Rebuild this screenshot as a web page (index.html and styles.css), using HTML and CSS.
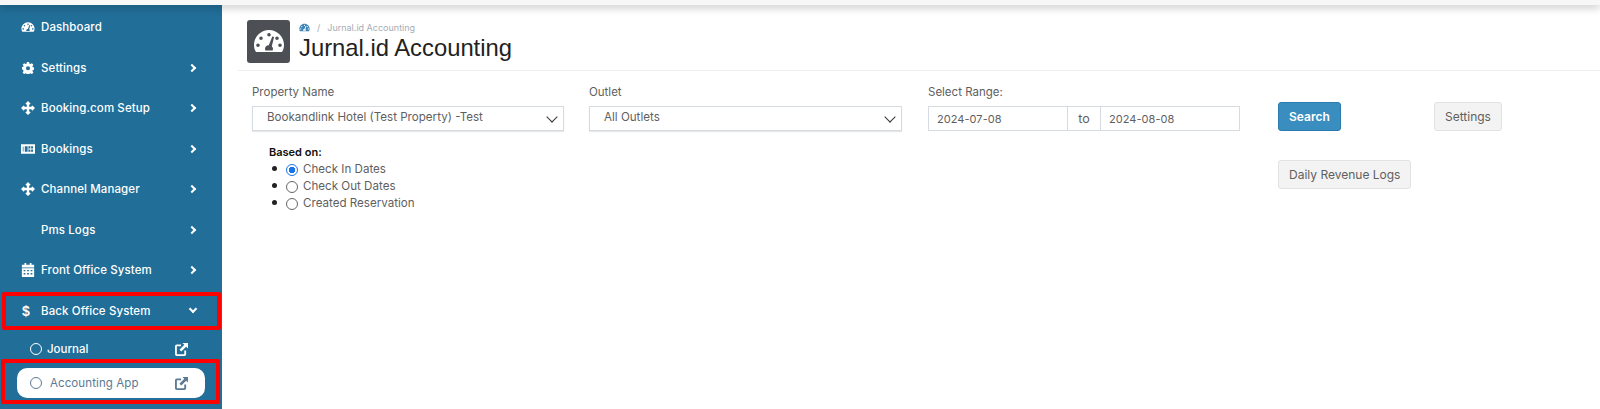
FILE: index.html
```html
<!DOCTYPE html>
<html lang="en">

<head>
    <meta charset="UTF-8">
    <meta name="viewport" content="width=device-width, initial-scale=1.0">
    <title>Jurnal.id Accounting</title>
    <link rel="stylesheet" href="styles.css">
</head>

<body>
    <svg class="defs" width="0" height="0">
        <symbol id="gauge" viewBox="0 0 32 24">
            <path fill="currentColor" fill-rule="evenodd" d="M16 1C7.500 1 1 8 1 16c0 3 .8 5.200 2 7h26c1.200-1.800 2-4 2-7 0-8-6.500-15-15-15zM16 4a1.800 1.800 0 1 1 0 3.600A1.800 1.800 0 0 1 16 4zM8 7.500a1.800 1.800 0 1 1 0 3.600 1.800 1.800 0 0 1 0-3.600zM24 7.500a1.800 1.800 0 1 1 0 3.600 1.800 1.800 0 0 1 0-3.600zM5 14.500a1.800 1.800 0 1 1 0 3.600 1.800 1.800 0 0 1 0-3.600zM27 14.500a1.800 1.800 0 1 1 0 3.600 1.800 1.800 0 0 1 0-3.600zM19.300 7.600l1.800.5-2.300 9.100c.8.700 1.200 1.600 1.200 2.600 0 .6-.1 1.100-.4 1.600h-7.200c-.3-.5-.4-1-.4-1.600 0-2 1.700-3.600 3.800-3.500z"/>
        </symbol>
        <symbol id="cog" viewBox="0 0 16 16">
            <path fill="currentColor" fill-rule="evenodd" d="M6.500 0h3l.4 2.200 1.400.6L13.200 1.500l2 2.300-1.300 1.800.6 1.400 1.500.3v3l-1.500.4-.6 1.400 1.300 1.800-2 2.300-1.900-1.300-1.400.6-.4 1.500h-3l-.4-1.500-1.400-.6-1.900 1.300-2-2.300 1.300-1.800-.6-1.400L0 9.800v-3l1.500-.3.6-1.400L.8 3.800l2-2.300 1.900 1.300 1.400-.6zM8 5.500a2.700 2.700 0 1 0 0 5.400 2.700 2.700 0 0 0 0-5.400z"/>
        </symbol>
        <symbol id="move" viewBox="0 0 16 16">
            <path fill="currentColor" d="M8 0l3 3-1 1H9.300v2.700H12V6l1-1 3 3-3 3-1-1v-.7H9.300V12H10l1 1-3 3-3-3 1-1h.7V9.300H4V10l-1 1-3-3 3-3 1 1v.7h2.700V4H6L5 3z"/>
        </symbol>
        <symbol id="card" viewBox="0 0 18 14">
            <path fill="currentColor" fill-rule="evenodd" d="M0 1h18v12H0zM5 3.500v7h3.500v-7zM9.500 3.500v7H15.500v-7zM2 4v1.200h2V4zM2 6.400v1.200h2V6.400zM2 8.800V10h2V8.800z"/>
            <path fill="currentColor" d="M9.500 6.500h6v1h-6zM12 3.500h1v7h-1z"/>
        </symbol>
        <symbol id="calendar" viewBox="0 0 14 16">
            <path fill="currentColor" fill-rule="evenodd" d="M3 0h2v2h4V0h2v2h3v3H0V2h3zM0 6h14v10H0zM2 8v1.500h2V8zM6 8v1.500h2V8zM10 8v1.500h2V8zM2 11.500V13h2v-1.500zM6 11.500V13h2v-1.500zM10 11.500V13h2v-1.500z"/>
        </symbol>
        <symbol id="link" viewBox="0 0 14 14">
            <path fill="none" stroke="currentColor" stroke-width="2" d="M6.500 2.500H1.900a.9.900 0 0 0-.9.900v8.700c0 .5.400.9.900.9h8.200c.5 0 .9-.4.900-.9V8"/>
            <path fill="currentColor" d="M8 0h6v6l-2-2-5.200 5.200-2-2L10 2z"/>
        </symbol>
    </svg>

    <div class="topbar"></div>

    <div class="wrap">
        <aside class="sidebar">
            <a class="nav-item"><svg class="nav-icon"><use href="#gauge"/></svg><span class="nav-label">Dashboard</span></a>
            <a class="nav-item"><svg class="nav-icon nav-icon-sm"><use href="#cog"/></svg><span class="nav-label">Settings</span><i class="chev"></i></a>
            <a class="nav-item"><svg class="nav-icon"><use href="#move"/></svg><span class="nav-label">Booking.com Setup</span><i class="chev"></i></a>
            <a class="nav-item"><svg class="nav-icon"><use href="#card"/></svg><span class="nav-label">Bookings</span><i class="chev"></i></a>
            <a class="nav-item"><svg class="nav-icon"><use href="#move"/></svg><span class="nav-label">Channel Manager</span><i class="chev"></i></a>
            <a class="nav-item"><span class="nav-icon"></span><span class="nav-label">Pms Logs</span><i class="chev"></i></a>
            <a class="nav-item"><svg class="nav-icon"><use href="#calendar"/></svg><span class="nav-label">Front Office System</span><i class="chev"></i></a>
            <a class="nav-item nav-open"><span class="nav-icon dollar">$</span><span class="nav-label">Back Office System</span><i class="chev chev-down"></i></a>
            <a class="sub-item"><i class="ring"></i><span class="sub-label">Journal</span><svg class="sub-link"><use href="#link"/></svg></a>
            <a class="sub-item sub-active"><i class="ring"></i><span class="sub-label">Accounting App</span><svg class="sub-link"><use href="#link"/></svg></a>
        </aside>

        <main class="content">
            <header class="page-head">
                <div class="page-icon"><svg class="page-gauge"><use href="#gauge"/></svg></div>
                <div class="page-titles">
                    <div class="crumbs"><svg class="crumb-icon"><use href="#gauge"/></svg><span class="crumb-sep">/</span><span>Jurnal.id Accounting</span></div>
                    <h1>Jurnal.id Accounting</h1>
                </div>
            </header>

            <form class="filters">
                <div class="col-property">
                    <label class="field-label">Property Name</label>
                    <div class="select">Bookandlink Hotel (Test Property) -Test<i class="select-arrow"></i></div>
                    <div class="based">
                        <b>Based on:</b>
                        <ul>
                            <li><span class="radio radio-on"></span>Check In Dates</li>
                            <li><span class="radio"></span>Check Out Dates</li>
                            <li><span class="radio"></span>Created Reservation</li>
                        </ul>
                    </div>
                </div>
                <div class="col-outlet">
                    <label class="field-label">Outlet</label>
                    <div class="select">All Outlets<i class="select-arrow"></i></div>
                </div>
                <div class="col-range">
                    <label class="field-label">Select Range:</label>
                    <div class="range">
                        <span class="range-date">2024-07-08</span>
                        <span class="range-to">to</span>
                        <span class="range-date">2024-08-08</span>
                    </div>
                </div>
                <div class="col-actions">
                    <div class="btn btn-primary">Search</div>
                    <div class="btn">Daily Revenue Logs</div>
                </div>
                <div class="col-settings">
                    <div class="btn">Settings</div>
                </div>
            </form>
        </main>
    </div>

    <!-- red marks drawn over the screenshot -->
    <div class="mark mark-back"></div>
    <div class="mark mark-app"></div>
</body>

</html>
```

FILE: styles.css
```css
* {
    padding: 0;
    margin: 0;
    box-sizing: border-box;
}

html,
body {
    height: 409px;
    overflow: hidden;
}

body {
    position: relative;
    background: #fff;
    font-family: Inter, "Liberation Sans", sans-serif;
    font-size: 11px;
    color: #5f5f5f;
}

ul,
li {
    list-style: none;
}

.defs {
    position: absolute;
}

.topbar {
    height: 5px;
    background: #f7f7f7;
    box-shadow: 0 2px 8px rgba(0, 0, 0, .3);
    position: relative;
    z-index: 2;
}

.wrap {
    display: flex;
    height: 404px;
}

.sidebar {
    width: 222px;
    flex: none;
    background: #216e99;
    padding-top: 2px;
    color: #fff;
}

.nav-item {
    display: flex;
    align-items: center;
    height: 40.5px;
    padding-left: 21px;
}

.nav-icon {
    width: 14px;
    height: 14px;
    margin-right: 6px;
    flex: none;
}

.nav-icon-sm {
    width: 12px;
    height: 12px;
    margin-left: 1px;
    margin-right: 7px;
}

.dollar {
    font: bold 14px/14px "Liberation Sans", sans-serif;
    padding-left: 1px;
}

.nav-label {
    flex: 1;
    font-size: 11.5px;
    font-weight: 500;
    letter-spacing: .1px;
}

.chev {
    width: 6px;
    height: 6px;
    margin-right: 27px;
    border: solid #fff;
    border-width: 2px 2px 0 0;
    transform: rotate(45deg);
}

.chev-down {
    margin-right: 26px;
    margin-top: -3px;
    transform: rotate(135deg);
}

.sub-item {
    display: flex;
    align-items: center;
    height: 30px;
    margin: 0 17px;
    padding: 0 13px;
}

.sub-item + .sub-item {
    margin-top: 4px;
}

.nav-open + .sub-item {
    margin-top: 3px;
}

.sub-active {
    background: #fff;
    color: #5b7a94;
    border-radius: 10px;
}

.ring {
    width: 12px;
    height: 12px;
    border: 1.5px solid currentColor;
    border-radius: 50%;
    margin-right: 5px;
    flex: none;
}

.sub-label {
    flex: 1;
    font-size: 11.5px;
    font-weight: 500;
}

.sub-active .sub-label {
    padding-left: 3px;
    font-weight: 400;
    letter-spacing: .1px;
}

.sub-link {
    width: 13px;
    height: 13px;
    margin-right: 4px;
    flex: none;
}

.content {
    flex: 1;
    padding-left: 30px;
}

.page-head {
    display: flex;
    align-items: center;
    height: 66px;
    margin-left: -14px;
    padding-left: 9px;
    padding-top: 7px;
    border-bottom: 1px solid #eee;
}

.page-icon {
    width: 43px;
    height: 43px;
    background: #4c5054;
    border-radius: 3px;
    margin-right: 9px;
    display: flex;
    align-items: center;
    justify-content: center;
    color: #fff;
}

.page-gauge {
    width: 32px;
    height: 24px;
}

.page-titles {
    margin-top: 1px;
}

.crumbs {
    display: flex;
    align-items: center;
    font-size: 9px;
    color: #a5adb5;
    height: 13px;
}

.crumb-icon {
    width: 11px;
    height: 9px;
    color: #3d85b5;
}

.crumb-sep {
    margin: 0 7px;
}

h1 {
    font: 400 23.8px/28px "Liberation Sans", sans-serif;
    color: #222;
}

.filters {
    display: grid;
    grid-template-columns: 337px 339px 350px 156px auto;
    align-items: start;
    justify-items: start;
    padding-top: 14px;
}

.field-label {
    display: block;
    font-size: 11.5px;
    line-height: 14px;
    margin-bottom: 7px;
}

.select {
    width: 312px;
    height: 25px;
    border: 1px solid #d5dae3;
    padding: 0 14px;
    line-height: 21px;
    font-size: 11.6px;
    box-shadow: 0 1px 1px #e8e8e8;
    position: relative;
}

.col-outlet .select {
    width: 313px;
}

.select-arrow {
    position: absolute;
    right: 7px;
    top: 6px;
    width: 8px;
    height: 8px;
    border: solid #333;
    border-width: 0 1.5px 1.5px 0;
    transform: rotate(45deg);
}

.based {
    padding: 14px 0 0 17px;
}

.based b {
    display: block;
    color: #111;
    font-size: 11px;
    font-weight: 600;
    line-height: 14px;
}

.based ul {
    margin-top: 1px;
}

.based li {
    display: flex;
    align-items: center;
    height: 17px;
    font-size: 11.6px;
    position: relative;
    padding-left: 17px;
}

.based li::before {
    content: "";
    position: absolute;
    left: 3px;
    top: 6px;
    width: 5px;
    height: 5px;
    border-radius: 50%;
    background: #222;
}

.radio {
    width: 12px;
    height: 12px;
    margin-top: 2px;
    border: 1px solid #666;
    border-radius: 50%;
    margin-right: 5px;
    flex: none;
    background: #fff;
}

.radio-on {
    border-color: #1a73e8;
    background: radial-gradient(circle, #1a73e8 3px, #fff 3.500px);
}

.range {
    display: flex;
    height: 25px;
    width: 312px;
    border: 1px solid #d5dae3;
}

.range-date {
    flex: 1;
    padding-left: 8px;
    line-height: 25px;
    font-size: 11px;
    letter-spacing: .05px;
}

.range-to {
    width: 34px;
    text-align: center;
    line-height: 24px;
    font-size: 12.5px;
    border: solid #d5dae3;
    border-width: 0 1px;
}

.col-actions {
    display: flex;
    flex-direction: column;
    align-items: flex-start;
    gap: 29px;
    padding-top: 17px;
}

.col-settings {
    padding-top: 17px;
}

.btn {
    height: 29px;
    padding: 0 10px;
    line-height: 27px;
    font-size: 12px;
    background: #f3f3f3;
    border: 1px solid #e2e2e2;
    border-radius: 3px;
}

.btn-primary {
    background: #3a8dbf;
    border-color: #2a7cae;
    color: #fff;
    font-weight: 600;
}

.mark {
    position: absolute;
    border: 4px solid #f00;
    border-radius: 2px;
}

.mark-back {
    left: 2px;
    top: 292px;
    width: 219px;
    height: 38px;
}

.mark-app {
    left: 1px;
    top: 359px;
    width: 219px;
    height: 45px;
}
```
